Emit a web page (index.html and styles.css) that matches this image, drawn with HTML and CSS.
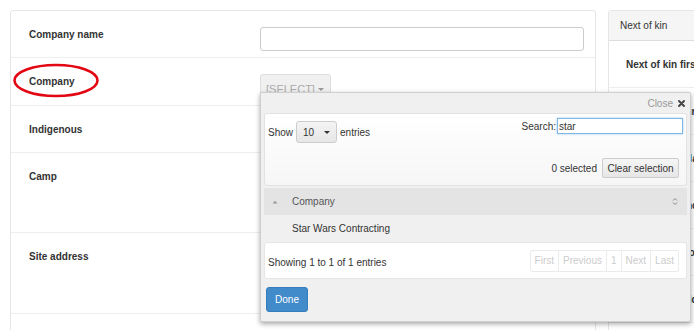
FILE: index.html
```html
<!DOCTYPE html>
<html lang="en">
<head>
  <meta charset="UTF-8">
  <title>Worker details</title>
  <link rel="stylesheet" href="styles.css">
</head>
<body>
  <div class="page">
    <div class="panel main">
      <div class="row h47">
        <div class="label">Company name</div>
        <div class="field"><input type="text" class="text-input"></div>
      </div>
      <div class="row h48">
        <div class="label">Company</div>
        <div class="field">
          <div class="picker">
            <button class="select-btn">[SELECT] <span class="caret"></span></button>

            <div class="popup">
              <div class="pop-head">
                <span class="close-text">Close</span>
                <svg class="close-x" width="7" height="7" viewBox="0 0 7 7"><path d="M1 1L6 6M6 1L1 6" stroke="#444" stroke-width="1.9" stroke-linecap="round"/></svg>
              </div>
              <div class="pop-body">
                <div class="tools">
                  <div class="tools-top">
                    <div class="length">
                      Show
                      <span class="len-select">10 <span class="caret dark"></span></span>
                      entries
                    </div>
                    <div class="search">
                      Search:<input type="text" class="search-input" value="star">
                    </div>
                  </div>
                  <div class="tools-sel">
                    <span>0 selected</span>
                    <button class="btn-clear">Clear selection</button>
                  </div>
                </div>

                <div class="thead">
                  <svg class="sort-up" width="6" height="4" viewBox="0 0 6 4"><path d="M0.5 3.5L3 0.8L5.5 3.5Z" fill="#999"/></svg>
                  <span class="th-name">Company</span>
                  <svg class="sort-both" width="6" height="9" viewBox="0 0 6 9"><path d="M1 3.5L3 1.5L5 3.5M1 5.5L3 7.5L5 5.5" fill="none" stroke="#888" stroke-width="1"/></svg>
                </div>
                <div class="trow">Star Wars Contracting</div>

                <div class="tfoot">
                  <span class="info">Showing 1 to 1 of 1 entries</span>
                  <div class="paging">
                    <span>First</span><span>Previous</span><span>1</span><span>Next</span><span>Last</span>
                  </div>
                </div>

                <button class="btn-done">Done</button>
              </div>
            </div>
          </div>
        </div>
      </div>
      <div class="row h47">
        <div class="label">Indigenous</div>
        <div class="field"></div>
      </div>
      <div class="row h80">
        <div class="label">Camp</div>
        <div class="field"></div>
      </div>
      <div class="row h81">
        <div class="label">Site address</div>
        <div class="field"></div>
      </div>
      <div class="row h47"></div>
    </div>

    <div class="panel kin">
      <div class="kin-head">Next of kin</div>
      <div class="kin-row">Next of kin first name</div>
      <div class="kin-row">Next of kin surname</div>
      <div class="kin-row">Next of kin relationship</div>
      <div class="kin-row">Next of kin phone</div>
      <div class="kin-row">Next of kin mobile</div>
      <div class="kin-row">Next of kin address</div>
    </div>
  </div>

  <svg class="mark" width="90" height="38" viewBox="0 0 90 38">
    <ellipse cx="45" cy="17.5" rx="41.5" ry="15.5" fill="none" stroke="#e30613" stroke-width="2.6"/>
  </svg>
</body>
</html>
```

FILE: styles.css
```css
body {
  margin: 0;
  font-family: "Liberation Sans", Arial, sans-serif;
  font-size: 10px;
  color: #333;
  background-color: #fff;
  overflow: hidden;
  height: 330px;
  position: relative;
}
.page {
  display: flex;
  gap: 12px;
  padding: 10px 0 0 10px;
}
.panel {
  border: 1px solid #e6e6e6;
  border-radius: 3px;
  background-color: #fff;
}
.main {
  flex: 0 0 586px;
  box-sizing: border-box;
  height: 340px;
}
.row {
  display: flex;
  box-sizing: border-box;
  padding: 16px 11px 0 18px;
  border-bottom: 1px solid #eee;
}
.h47 { height: 47px; }
.h48 { height: 48px; }
.h80 { height: 80px; }
.h81 { height: 81px; }
.label {
  width: 231px;
  flex: 0 0 231px;
  font-weight: bold;
  line-height: 16px;
}
.field {
  flex: 1;
}
.text-input {
  box-sizing: border-box;
  width: 100%;
  height: 24px;
  margin: 0;
  border: 1px solid #ccc;
  border-radius: 3px;
  display: block;
}
.picker {
  position: relative;
}
.select-btn {
  display: block;
  box-sizing: border-box;
  width: 71px;
  height: 24px;
  margin: 0;
  padding: 6px 0 0 5px;
  text-align: left;
  border: 1px solid #ddd;
  border-radius: 3px;
  background-color: #f0f0f0;
  color: #aaa;
  font-family: inherit;
  font-size: 11px;
  line-height: 12px;
  vertical-align: top;
}
.caret {
  display: inline-block;
  width: 0;
  height: 0;
  border-left: 3px solid transparent;
  border-right: 3px solid transparent;
  border-top: 3px solid #999;
  vertical-align: 2px;
}
.caret.dark {
  border-top-color: #333;
}

/* dropdown with the company table */
.popup {
  position: absolute;
  left: 0;
  top: 18px;
  width: 431px;
  height: 230px;
  box-sizing: border-box;
  background-color: #f0f0f0;
  border: 1px solid #cfcfcf;
  border-radius: 2px;
  box-shadow: 0 2px 5px rgba(0, 0, 0, 0.35);
  z-index: 5;
}
.pop-head {
  height: 20px;
  display: flex;
  justify-content: flex-end;
  align-items: center;
  padding-right: 5px;
  gap: 5px;
}
.close-text {
  color: #999;
}
.pop-body {
  padding: 0 3px;
}
.tools {
  box-sizing: border-box;
  height: 73px;
  border: 1px solid #e2e2e2;
  border-radius: 3px;
  background: linear-gradient(#fff, #f6f6f6);
  padding: 4px 3px 0 3px;
}
.tools-top {
  display: flex;
  justify-content: space-between;
  align-items: flex-start;
}
.length {
  display: flex;
  align-items: center;
  gap: 3px;
  margin-top: 3px;
}
.len-select {
  box-sizing: border-box;
  width: 41px;
  height: 22px;
  display: flex;
  align-items: center;
  justify-content: space-between;
  padding: 0 6px;
  border: 1px solid #ccc;
  border-radius: 3px;
  background: linear-gradient(#f4f4f4, #e6e6e6);
}
.search {
  display: flex;
  align-items: center;
  gap: 1px;
}
.search-input {
  box-sizing: border-box;
  width: 126px;
  height: 16px;
  margin: 0;
  padding: 0 1px;
  border: 1px solid #7fb7e6;
  box-shadow: 0 0 2px #9cc8ee;
  font-family: inherit;
  font-size: 10px;
  color: #333;
}
.tools-sel {
  display: flex;
  justify-content: flex-end;
  align-items: center;
  gap: 5px;
  margin-top: 15px;
  padding-right: 4px;
}
.btn-clear {
  box-sizing: border-box;
  width: 77px;
  height: 20px;
  margin: 0;
  padding: 0;
  border: 1px solid #ccc;
  border-radius: 2px;
  background: linear-gradient(#f6f6f6, #e6e6e6);
  font-family: inherit;
  font-size: 10px;
  color: #333;
}
.thead {
  margin-top: 2px;
  height: 27px;
  background-color: #e4e4e4;
  display: flex;
  align-items: center;
  padding: 0 9px 0 8px;
  color: #555;
}
.sort-up {
  margin-right: 14px;
}
.th-name {
  flex: 1;
}
.trow {
  height: 27px;
  line-height: 27px;
  padding-left: 28px;
}
.tfoot {
  box-sizing: border-box;
  height: 37px;
  background-color: #fff;
  border: 1px solid #e6e6e6;
  border-radius: 3px;
  display: flex;
  justify-content: space-between;
  align-items: center;
  padding: 0 7px 0 3px;
}
.info {
  margin-top: 3px;
}
.paging {
  display: flex;
  height: 20px;
  border: 1px solid #ebebeb;
  border-radius: 2px;
  margin-top: 1px;
  color: #ccc;
}
.paging span {
  padding: 0 4px;
  line-height: 19px;
  border-left: 1px solid #ebebeb;
}
.paging span:first-child {
  border-left: none;
}
.btn-done {
  display: block;
  margin: 8px 0 0 2px;
  width: 42px;
  height: 25px;
  padding: 0;
  border: 1px solid #357ebd;
  border-radius: 3px;
  background-color: #428bca;
  color: #fff;
  font-family: inherit;
  font-size: 10px;
}

/* next of kin */
.kin {
  flex: 0 0 300px;
  height: 340px;
  box-sizing: border-box;
}
.kin-head {
  height: 30px;
  line-height: 29px;
  box-sizing: border-box;
  padding-left: 11px;
  background-color: #f5f5f5;
  border-bottom: 1px solid #ddd;
}
.kin-row {
  box-sizing: border-box;
  height: 47px;
  padding: 16px 0 0 17px;
  line-height: 16px;
  font-weight: bold;
  border-bottom: 1px solid #eee;
}

/* red annotation ring */
.mark {
  position: absolute;
  left: 11px;
  top: 63px;
}
```
